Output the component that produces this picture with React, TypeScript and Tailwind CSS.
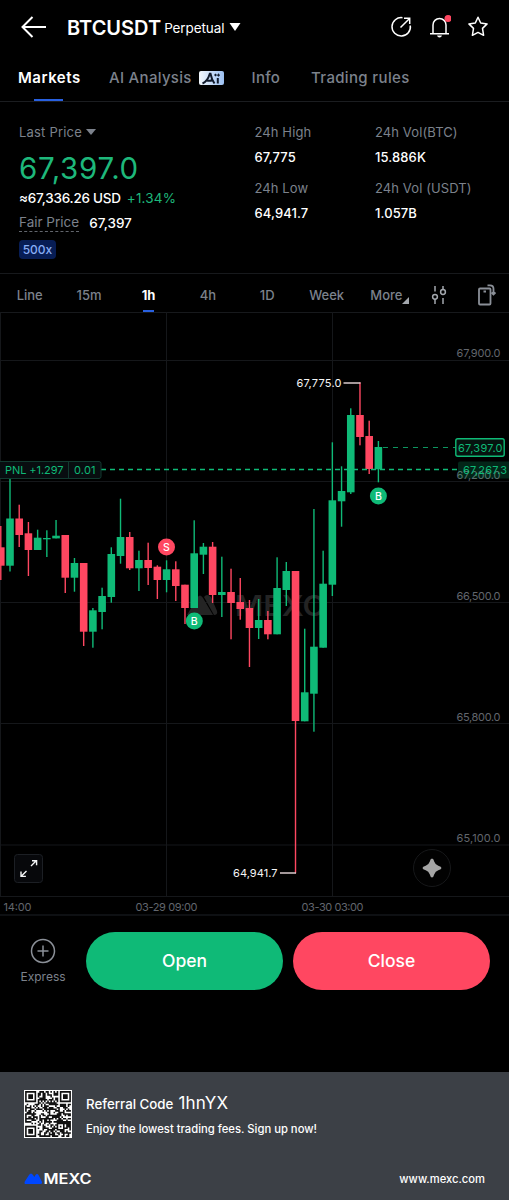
import clsx from 'clsx'

type Candle = [top: number, bottom: number, high: number, low: number, up: 0 | 1]

// body top, body bottom, wick top, wick bottom, direction
const candles: Candle[] = [
  [547.3, 565.7, 526, 580, 0],
  [518.5, 565.7, 470, 571.5, 1],
  [518.5, 535, 504.7, 547, 0],
  [533.3, 550, 522, 576, 0],
  [537.7, 550, 529.7, 550, 1],
  [538, 539.3, 530.3, 557, 1],
  [535.7, 538.4, 520, 538.4, 1],
  [535, 577.7, 535, 593, 0],
  [563, 577.7, 558, 591.7, 1],
  [563, 631.7, 563, 646, 0],
  [610.3, 631.7, 608, 647.7, 1],
  [596, 612, 587.7, 629.3, 1],
  [554, 597, 547.3, 602.7, 1],
  [537, 556, 498.7, 563.7, 1],
  [537, 568.3, 532, 570, 0],
  [560, 568.3, 550.7, 591, 1],
  [560, 568, 542.7, 585, 0],
  [566.7, 580, 565.3, 599, 0],
  [569.3, 580, 560.3, 592.3, 1],
  [569.3, 586, 561.3, 601, 0],
  [584.7, 608, 584.7, 624, 0],
  [553.3, 608, 520.3, 608, 1],
  [546.7, 554.7, 543, 574, 1],
  [546.7, 595, 542, 603, 0],
  [592, 595, 556.7, 617, 1],
  [592, 603, 568.7, 639.3, 0],
  [602, 609, 578, 619.7, 0],
  [608, 628, 600, 667, 0],
  [620, 628, 599, 639, 1],
  [620, 634.3, 611, 639.3, 0],
  [588, 634.3, 557.3, 634.3, 1],
  [571, 590, 562, 606, 1],
  [571, 721, 571, 873.3, 0],
  [692.3, 721.3, 628.7, 721.3, 1],
  [646.7, 693.7, 509, 731.7, 1],
  [583.7, 647.7, 550.7, 647.7, 1],
  [500.3, 584.7, 442.3, 596, 1],
  [491, 501.3, 466.3, 526.7, 1],
  [415, 492.3, 408.3, 494, 1],
  [415, 437, 382.3, 445.3, 0],
  [436, 469, 420.7, 474, 0],
  [447, 469.3, 441, 482.3, 1],
]

const GREEN = '#0fba77'
const RED = '#ff4761'
const STEP = 9.21

const priceLabels = [
  { y: 357.2, line: 360.5, text: '67,900.0' },
  { y: 478.7, line: 481.5, text: '67,200.0' },
  { y: 599.8, line: 602.5, text: '66,500.0' },
  { y: 721, line: 723.5, text: '65,800.0' },
  { y: 842, line: 845, text: '65,100.0' },
]

function Marker({ x, y, side }: { x: number; y: number; side: 'B' | 'S' }) {
  return (
    <g>
      <circle cx={x} cy={y} r={8.5} fill={side === 'B' ? GREEN : RED} />
      <text x={x} y={y + 3.8} textAnchor="middle" fontSize={10.5} fontWeight={500} fill="#fff">
        {side}
      </text>
    </g>
  )
}

function Chart() {
  return (
    <svg viewBox="0 312 509 603" width={509} height={603} className="block" fontSize={11}>
      {/* grid */}
      <g stroke="#15171a" strokeWidth={1}>
        {priceLabels.map((p) => (
          <line key={p.text} x1={0} x2={509} y1={p.line} y2={p.line} />
        ))}
        <line x1={0.5} x2={0.5} y1={312} y2={896} />
        <line x1={166.5} x2={166.5} y1={312} y2={896} />
        <line x1={332.5} x2={332.5} y1={312} y2={896} />
        <line x1={0} x2={509} y1={896.5} y2={896.5} />
      </g>

      {/* watermark */}
      <g fill="#242424">
        <path d="M187 615L197 598q3-5 6 0l10 17zM204 597q3-4 7 0l6 14q1 4-3 4z" />
        <text x={235} y={615.5} fontSize={28} fontWeight={600} textLength={90} lengthAdjust="spacingAndGlyphs">
          MEXC
        </text>
      </g>

      {candles.map(([top, bottom, high, low, up], i) => {
        const x = 10 + (i - 1) * STEP
        return (
          <g key={i} fill={up ? GREEN : RED}>
            <rect x={x - 0.7} y={high} width={1.4} height={low - high} />
            <rect x={x - 3.8} y={top} width={7.6} height={bottom - top} />
          </g>
        )
      })}

      {/* high / low callouts */}
      <g fill="#f4f5f6">
        <text x={296.5} y={387} textLength={45}>67,775.0</text>
        <text x={233} y={877.3} textLength={44.5}>64,941.7</text>
      </g>
      <path d="M343.5 383H360.5M280 873H296" stroke="#d9c9cc" strokeWidth={1.3} />

      {/* position and last price lines */}
      <path d="M101 469.5H457" stroke={GREEN} strokeWidth={1.3} strokeDasharray="5 4" />
      <path d="M383 447.5H456" stroke={GREEN} strokeWidth={0.8} strokeDasharray="5 5" />

      <g fill="#62666d">
        {priceLabels.map((p) => (
          <text key={p.text} x={456.5} y={p.y} textLength={44}>
            {p.text}
          </text>
        ))}
        <text x={3.5} y={910.6} textLength={28}>14:00</text>
        <text x={135.5} y={910.6} textLength={62}>03-29 09:00</text>
        <text x={301.5} y={910.6} textLength={62}>03-30 03:00</text>
      </g>

      <rect x={458} y={461.5} width={54} height={17} rx={2} fill="#0fba77" fillOpacity={0.2} />
      <text x={463} y={473.7} textLength={44} fill={GREEN}>67,267.3</text>

      <rect x={455.8} y={438.7} width={48.4} height={17.6} rx={2} fill="#06130f" stroke={GREEN} strokeWidth={1.4} />
      <text x={458} y={451.9} textLength={44.5} fill={GREEN}>67,397.0</text>

      <rect x={-2} y={461.5} width={103} height={17} rx={2} fill="#080d10" stroke="#123a30" />
      <path d="M68.5 462V478" stroke="#123a30" />
      <text x={5} y={473.8} textLength={58.5} fill={GREEN}>PNL +1.297</text>
      <text x={74} y={473.8} textLength={21.5} fill={GREEN}>0.01</text>

      <Marker x={166.5} y={547} side="S" />
      <Marker x={194.3} y={621} side="B" />
      <Marker x={378.4} y={496} side="B" />

      {/* fullscreen */}
      <rect x={14.5} y={854.5} width={28} height={28} rx={3} fill="#07080b" stroke="#1c1f24" />
      <path
        d="M31 866l5.5-5.5M32 860.7h4.6v4.6M26.5 871l-5.5 5.5M21 871.5v4.9h4.9"
        fill="none"
        stroke="#f4f5f6"
        strokeWidth={1.4}
      />

      {/* assistant */}
      <circle cx={432} cy={868} r={18.5} fill="#020202" stroke="#17181a" />
      <path
        d="M432 858.5q1.500 0 2.300 3.200 1 3 4 4 3.200 .8 3.200 2.300t-3.200 2.300q-3 1-4 4-.8 3.200-2.300 3.200t-2.300-3.200q-1-3-4-4-3.200-.8-3.200-2.300t3.200-2.300q3-1 4-4 .8-3.200 2.300-3.200z"
        fill="#a5a5a5"
      />
    </svg>
  )
}

function Header() {
  return (
    <header className="flex h-[54px] items-center px-[21px] text-white">
      <svg width="26" height="22" viewBox="0 0 26 22" fill="none" stroke="currentColor" strokeWidth="2">
        <path d="M11.5 1L1.5 11l10 10M1.5 11H25" />
      </svg>
      <h1 className="ml-5 pt-px text-[20px] font-semibold">BTCUSDT</h1>
      <span className="ml-[3px] pt-[2px] text-[13.5px] tracking-[-0.1px]">Perpetual</span>
      <svg className="ml-[5px]" width="12" height="8" viewBox="0 0 12 8" fill="currentColor">
        <path d="M0.5 0h11L6 8z" />
      </svg>
      <div className="ml-auto flex items-center gap-[17px]">
        <svg width="21" height="22" viewBox="0 0 21 22" fill="none" stroke="currentColor" strokeWidth="1.5">
          <path d="M11.5 1.700A9.200 9.200 0 1 0 19.300 9.500M9.5 11.5L18.3 2.7M13 2.3H18.7V8" />
        </svg>
        <svg width="22" height="24" viewBox="0 0 22 24" fill="none" stroke="currentColor" strokeWidth="1.5">
          <path d="M4 18.5V10a6.500 6.500 0 0 1 13 0v8.500M1 18.8h19" />
          <path d="M8 20.5h5q-.5 2-2.500 2t-2.500-2z" fill="currentColor" stroke="none" />
          <circle cx="19" cy="3.5" r="3.5" fill="#ff4761" stroke="none" />
        </svg>
        <svg width="20" height="22" viewBox="0 0 20 22" fill="none" stroke="currentColor" strokeWidth="1.5" strokeLinejoin="round">
          <path d="M10 1.200l2.700 5.800 6.400.9-4.600 4.500 1.100 6.900L10 16.400l-5.600 2.900 1.100-6.900L.9 7.900l6.400-.9z" />
        </svg>
      </div>
    </header>
  )
}

function Tabs() {
  return (
    <nav className="flex h-[48px] items-center border-b border-[#1b1d20] pl-[18px] text-[15px] font-medium tracking-[0.3px] text-[#7c828c]">
      <div className="relative flex h-full w-[91px] items-center font-semibold text-white">
        <span className="pt-px tracking-[0.5px]">Markets</span>
        <span className="absolute bottom-0 left-4 h-[2px] w-[29px] bg-[#2860e0]" />
      </div>
      <div className="flex w-[142.5px] items-center gap-[7px]">
        <span className="pt-px">AI Analysis</span>
        <svg width="25" height="14" viewBox="0 0 25 14">
          <defs>
            <linearGradient id="ai" x1="0" x2="1">
              <stop offset="0" stopColor="#f2f7fc" />
              <stop offset="1" stopColor="#9cc0f2" />
            </linearGradient>
          </defs>
          <rect width="25" height="14" rx="2" fill="url(#ai)" />
          <path d="M3.5 12.5q5-2 7.300-9.700h.7q1.200 6 4 9.700M7 9q3.500 1.500 6.500 0" fill="none" stroke="#101a2b" strokeWidth="2" />
          <path d="M18.8 7v5.500" stroke="#101a2b" strokeWidth="2" />
          <path d="M15 4l1.500-1.500L18 4l-1.500 1.500zM18 4.200l1.500-2 1.500 2-1.500 1.600z" fill="#101a2b" />
        </svg>
      </div>
      <div className="w-[59.5px] pt-px">Info</div>
      <div className="pt-px tracking-[0.35px]">Trading rules</div>
    </nav>
  )
}

function Stat({ label, value }: { label: string; value: string }) {
  return (
    <div className="h-14">
      <div className="text-[13px] leading-5 tracking-[0.1px] text-[#7c828c]">{label}</div>
      <div className="mt-[5px] text-[13px] font-medium leading-5 tracking-[0.1px] text-white">{value}</div>
    </div>
  )
}

function Stats() {
  return (
    <section className="flex h-[171px] pl-[19px] pt-5">
      <div className="w-[235.5px]">
        <div className="flex items-center gap-1 text-[13px] leading-5 tracking-[0.2px] text-[#7c828c]">
          Last Price
          <svg width="10" height="6" viewBox="0 0 10 6" fill="currentColor">
            <path d="M0 0h10L5 6z" />
          </svg>
        </div>
        <div className="mt-[7px] text-[29.5px] leading-[38px] tracking-[0.7px] text-[#1eb87b]">67,397.0</div>
        <div className="mt-px flex gap-[6px] text-[13.5px] leading-5">
          <span className="font-medium tracking-[-0.25px] text-white">≈67,336.26 USD</span>
          <span className="tracking-[0.2px] text-[#1eb87b]">+1.34%</span>
        </div>
        <div className="mt-[6px] flex items-start gap-[10px] text-[13.5px] leading-[18px]">
          <span className="border-b border-dashed border-[#62666d] leading-[17px] text-[#7c828c]">Fair Price</span>
          <span className="font-medium text-white">67,397</span>
        </div>
        <div className="mt-[8px] flex h-[19px] w-[37px] items-center justify-center rounded bg-[#071d55] text-[12px] font-medium text-[#87adf5]">
          500x
        </div>
      </div>
      <div className="w-[120.5px]">
        <Stat label="24h High" value="67,775" />
        <Stat label="24h Low" value="64,941.7" />
      </div>
      <div>
        <Stat label="24h Vol(BTC)" value="15.886K" />
        <Stat label="24h Vol (USDT)" value="1.057B" />
      </div>
    </section>
  )
}

const intervals = ['Line', '15m', '1h', '4h', '1D', 'Week']

function Intervals() {
  return (
    <div className="flex h-10 items-center border-y border-[#17191c] text-[13px] font-medium text-[#7c828c]">
      {intervals.map((name) => (
        <div
          key={name}
          className={clsx(
            'relative flex h-full w-[59.4px] items-center justify-center pt-[5px]',
            name === '1h' && 'font-bold text-white',
          )}
        >
          {name}
          {name === '1h' && <span className="absolute bottom-0 h-[2px] w-[11px] bg-[#2860e0]" />}
        </div>
      ))}
      <div className="ml-[14px] flex items-end pt-[5px]">
        More
        <svg width="7" height="8" viewBox="0 0 7 8" fill="#a3a7ad">
          <path d="M7 0v7H0z" />
        </svg>
      </div>
      <div className="ml-[22px] flex items-center gap-[31px] pt-[3px]">
        <svg width="16" height="20" viewBox="0 0 16 20" fill="none" stroke="#a3a7ad" strokeWidth="1.5">
          <path d="M4 1v5.500M4 14v5M12 1v3M12 13v6" />
          <circle cx="4" cy="11.8" r="2.4" />
          <circle cx="12" cy="7" r="2.4" />
        </svg>
        <svg width="18" height="22" viewBox="0 0 18 22" fill="none" stroke="#8b9098" strokeWidth="1.8">
          <rect x="1" y="4.5" width="11.5" height="16" rx="1" />
          <path d="M5.5 7.5h2.500M9.5 1.3h2.500q3.500 0 3.500 3.500v5.500M13.5 8.500l2 2 2-2" />
        </svg>
      </div>
    </div>
  )
}

function Actions() {
  return (
    <div className="flex h-[158px] items-start border-t-2 border-[#0e1013] pl-[21px] pr-[18px] pt-4">
      <div className="flex w-[44px] flex-col items-center pt-[6px] text-[12px] leading-[18px] text-[#7c828c]">
        <svg width="26" height="26" viewBox="0 0 26 26" fill="none" stroke="#8b9098" strokeWidth="1.5">
          <circle cx="13" cy="13" r="11.5" />
          <path d="M13 7.5v11M7.5 13h11" />
        </svg>
        <span className="mt-[4px]">Express</span>
      </div>
      <button className="ml-[21px] h-[58px] w-[197px] rounded-full bg-[#0fba77] pt-px text-[17.5px] font-medium text-white">Open</button>
      <button className="ml-[10px] h-[58px] w-[197px] rounded-full bg-[#ff4761] pt-px text-[17.5px] font-medium text-white">Close</button>
    </div>
  )
}

const QR = 29

function isDark(x: number, y: number) {
  const finders = [
    [3, 3],
    [QR - 4, 3],
    [3, QR - 4],
  ]
  for (const [cx, cy] of finders) {
    const d = Math.max(Math.abs(x - cx), Math.abs(y - cy))
    if (d <= 4) return d <= 1 || d === 3
  }
  const a = Math.max(Math.abs(x - 22), Math.abs(y - 22))
  if (a <= 2) return a !== 1
  if (x === 6 || y === 6) return (x + y) % 2 === 0
  const n = Math.sin(x * 12.9898 + y * 78.233) * 43758.5453
  return n - Math.floor(n) > 0.46
}

function QrCode() {
  const cells = []
  for (let y = 0; y < QR; y++) {
    for (let x = 0; x < QR; x++) {
      if (isDark(x, y)) cells.push(`M${x} ${y}h1v1h-1z`)
    }
  }
  return (
    <svg width="48" height="48" viewBox="-0.7 -0.7 30.4 30.4">
      <rect x="-1" y="-1" width="32" height="32" fill="#fff" />
      <path d={cells.join('')} fill="#111" />
    </svg>
  )
}

function Footer() {
  return (
    <footer className="h-32 bg-[#3c4046] px-6 pt-[18px] text-white">
      <div className="flex gap-[14px]">
        <QrCode />
        <div className="pt-px">
          <div className="flex items-baseline gap-[5px] text-[13.3px] font-medium leading-6">
            Referral Code <span className="text-[17px] font-normal tracking-[0.2px]">1hnYX</span>
          </div>
          <div className="mt-[3px] text-[11.25px] font-medium leading-5">Enjoy the lowest trading fees. Sign up now!</div>
        </div>
      </div>
      <div className="mt-[31px] flex items-center justify-between">
        <svg width="68" height="14" viewBox="0 0 68 14">
          <path d="M1 12Q0 11 .8 9.500L5 3q2-3 4 0l1.300 2L11.500 3q1.700-2 3.300.5l3 6q1 2.500-1.500 2.500z" fill="#0047ff" />
          <text x="19.5" y="12" fontSize="13.8" fontWeight="600" fill="#fff" textLength="48" lengthAdjust="spacingAndGlyphs">
            MEXC
          </text>
        </svg>
        <span className="pt-px text-[11.2px] font-medium">www.mexc.com</span>
      </div>
    </footer>
  )
}

export default function App() {
  return (
    <main className="h-[1200px] w-[509px] overflow-hidden bg-black font-['Inter',sans-serif]">
      <Header />
      <Tabs />
      <Stats />
      <div className="h-[39px]">
        <Intervals />
      </div>
      <div className="h-[602px]">
        <Chart />
      </div>
      <Actions />
      <Footer />
    </main>
  )
}
